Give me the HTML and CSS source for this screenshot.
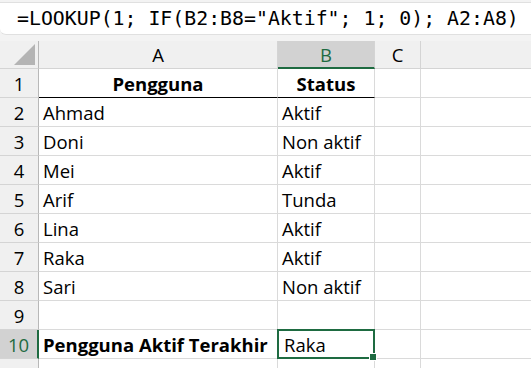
FILE: index.html
```html
<!DOCTYPE html>
<html lang="id">
<head>
    <meta charset="UTF-8">
    <title>LOOKUP Pengguna Aktif</title>
    <link rel="stylesheet" href="styles.css">
</head>
<body>

<div class="workbook">
    <div class="formula-bar">
        <div class="formula-box">=LOOKUP(1; IF(B2:B8="Aktif"; 1; 0); A2:A8)</div>
    </div>

    <div class="sheet">
        <!-- kepala kolom -->
        <div class="col-head corner"><span class="corner-mark"></span></div>
        <div class="col-head">A</div>
        <div class="col-head active">B</div>
        <div class="col-head">C</div>
        <div class="col-head"></div>

        <div class="row-head">1</div>
        <div class="cell title">Pengguna</div>
        <div class="cell title">Status</div>
        <div class="cell"></div>
        <div class="cell"></div>

        <div class="row-head">2</div>
        <div class="cell">Ahmad</div>
        <div class="cell">Aktif</div>
        <div class="cell"></div>
        <div class="cell"></div>

        <div class="row-head">3</div>
        <div class="cell">Doni</div>
        <div class="cell">Non aktif</div>
        <div class="cell"></div>
        <div class="cell"></div>

        <div class="row-head">4</div>
        <div class="cell">Mei</div>
        <div class="cell">Aktif</div>
        <div class="cell"></div>
        <div class="cell"></div>

        <div class="row-head">5</div>
        <div class="cell">Arif</div>
        <div class="cell">Tunda</div>
        <div class="cell"></div>
        <div class="cell"></div>

        <div class="row-head">6</div>
        <div class="cell">Lina</div>
        <div class="cell">Aktif</div>
        <div class="cell"></div>
        <div class="cell"></div>

        <div class="row-head">7</div>
        <div class="cell">Raka</div>
        <div class="cell">Aktif</div>
        <div class="cell"></div>
        <div class="cell"></div>

        <div class="row-head">8</div>
        <div class="cell">Sari</div>
        <div class="cell">Non aktif</div>
        <div class="cell"></div>
        <div class="cell"></div>

        <div class="row-head">9</div>
        <div class="cell"></div>
        <div class="cell"></div>
        <div class="cell"></div>
        <div class="cell"></div>

        <div class="row-head active">10</div>
        <div class="cell bold">Pengguna Aktif Terakhir</div>
        <div class="cell selected">Raka<span class="fill-handle"></span></div>
        <div class="cell"></div>
        <div class="cell"></div>

        <div class="row-head"></div>
        <div class="cell"></div>
        <div class="cell"></div>
        <div class="cell"></div>
        <div class="cell"></div>
    </div>
</div>

</body>
</html>
```

FILE: styles.css
```css
body {
    margin: 0;
    overflow: hidden;
    background: #f3f3f3;
}

.workbook {
    width: 531px;
    height: 368px;
    overflow: hidden;
}

.formula-bar {
    height: 41px;
    padding-top: 2px;
    box-sizing: border-box;
    background: #f3f3f3;
}

.formula-box {
    height: 33px;
    margin-right: -10px;
    padding-left: 17px;
    background: #ffffff;
    border: 1px solid #e0e0e0;
    border-left: none;
    border-radius: 0 0 0 6px;
    box-sizing: border-box;
    font-family: "DejaVu Sans Mono", "Liberation Mono", monospace;
    font-size: 19.85px;
    line-height: 31px;
    color: #000;
    white-space: nowrap;
}

.sheet {
    display: grid;
    grid-template-columns: 39px 239px 97px 46px 120px;
    grid-template-rows: 28px repeat(11, 29px);
    font-family: "Open Sans", "Lato", sans-serif;
    font-size: 18.5px;
    font-variant-ligatures: none;
    background: #fff;
}

.col-head {
    background: #f0f0f0;
    border-right: 1px solid #d4d4d4;
    border-bottom: 1px solid #d4d4d4;
    box-sizing: border-box;
    text-align: center;
    line-height: 28px;
    color: #000;
}

.col-head.active {
    background: #d2d2d2;
    color: #1e6b41;
    border-bottom: 2px solid #1e6b41;
}

.corner {
    position: relative;
    border-right-color: #b8b8b8;
}

.corner-mark {
    position: absolute;
    right: 3px;
    bottom: 3px;
    width: 0;
    height: 0;
    border-left: 21px solid transparent;
    border-bottom: 21px solid #b4b4b4;
}

.row-head {
    background: #f0f0f0;
    border-right: 1px solid #b8b8b8;
    border-bottom: 1px solid #d4d4d4;
    box-sizing: border-box;
    text-align: center;
    line-height: 29px;
    color: #000;
}

.row-head.active {
    background: #d2d2d2;
    color: #1e6b41;
    border-right: 2px solid #1e6b41;
}

.cell {
    border-right: 1px solid #dadada;
    border-bottom: 1px solid #dadada;
    box-sizing: border-box;
    padding: 0 4px;
    line-height: 29px;
    color: #000;
    white-space: nowrap;
}

.title {
    font-weight: bold;
    text-align: center;
    border-bottom-color: #000;
}

.bold {
    font-weight: bold;
}

.selected {
    position: relative;
    border: 2px solid #1e6b41;
    margin: -1px 0 0 -1px;
    line-height: 27px;
    padding-left: 5px;
}

.fill-handle {
    position: absolute;
    right: -4px;
    bottom: -4px;
    width: 6px;
    height: 6px;
    background: #1e6b41;
    border: 1px solid #fff;
}
```
